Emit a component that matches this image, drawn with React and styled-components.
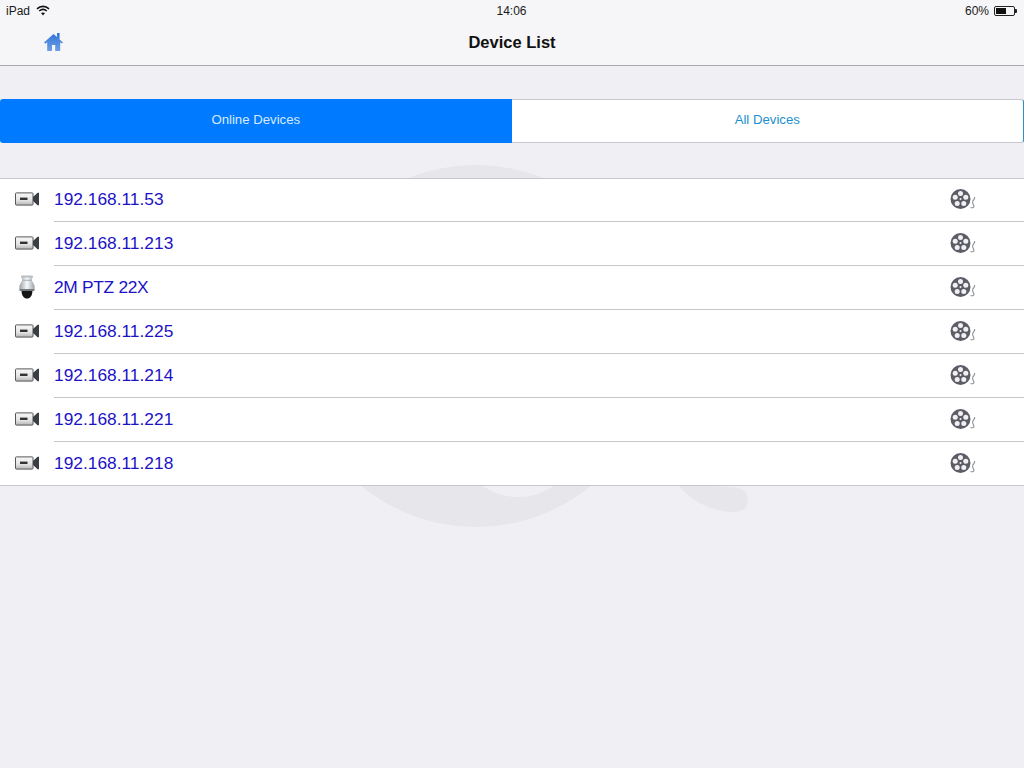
import React from "react";
import styled, { createGlobalStyle } from "styled-components";

const Global = createGlobalStyle`
  html, body { margin: 0; padding: 0; background: #efeff4; }
  body { font-family: "Liberation Sans", Arial, sans-serif; }
`;

const Page = styled.div`
  position: relative;
  width: 1024px;
  height: 768px;
  overflow: hidden;
  background: #efeff4;
`;

const Watermark = styled.svg`
  position: absolute;
  left: 0;
  top: 0;
  width: 1024px;
  height: 768px;
`;

const Content = styled.div`
  position: relative;
  display: flex;
  flex-direction: column;
`;

const Header = styled.header`
  height: 65px;
  background: #f6f6f8;
  border-bottom: 1px solid #a9a9ab;
  display: flex;
  flex-direction: column;
`;

const StatusBar = styled.div`
  height: 21px;
  padding: 0 7px 0 6px;
  display: grid;
  grid-template-columns: 1fr auto 1fr;
  align-items: center;
  font-size: 12px;
  color: #1a1a1a;
`;

const StatusLeft = styled.div`
  display: flex;
  align-items: center;
  gap: 6px;
`;

const StatusRight = styled.div`
  display: flex;
  align-items: center;
  justify-content: flex-end;
  gap: 5px;
`;

const Battery = styled.div`
  position: relative;
  box-sizing: border-box;
  width: 21px;
  height: 10px;
  border: 1px solid #222;
  border-radius: 2px;
  padding: 1px;
  margin-right: 2px;
  &::after {
    content: "";
    position: absolute;
    right: -3px;
    top: 2px;
    width: 2px;
    height: 4px;
    background: #222;
    border-radius: 0 1px 1px 0;
  }
`;

const BatteryFill = styled.div`
  height: 100%;
  background: #111;
`;

const NavBar = styled.div`
  position: relative;
  flex: 1;
  display: flex;
  align-items: center;
  justify-content: center;
  padding-bottom: 1px;
`;

const Title = styled.h1`
  margin: 0;
  font-size: 16.5px;
  font-weight: 700;
  color: #111;
`;

const HomeButton = styled.button`
  position: absolute;
  left: 43px;
  top: 11px;
  width: 21px;
  height: 20px;
  padding: 0;
  border: 0;
  background: none;
  display: flex;
`;

const Segments = styled.div`
  margin-top: 33px;
  height: 44px;
  display: flex;
  box-sizing: border-box;
`;

const Segment = styled.div`
  flex: 1;
  box-sizing: border-box;
  display: flex;
  align-items: center;
  justify-content: center;
  padding-bottom: 4px;
  font-size: 13.2px;
  background: ${(p) => (p.$active ? "#007aff" : "#ffffff")};
  color: ${(p) => (p.$active ? "#d8eaff" : "#1b8fd0")};
  border-radius: ${(p) => (p.$active ? "3px 0 0 3px" : "0 3px 3px 0")};
  border: ${(p) => (p.$active ? "none" : "1px solid #c8c8cc")};
  border-left: none;
  border-right: ${(p) => (p.$active ? "none" : "1px solid #2f8fc0")};
`;

const List = styled.ul`
  list-style: none;
  margin: 35px 0 0;
  padding: 0;
  background: #fff;
  border-top: 1px solid #c8c7cc;
  border-bottom: 1px solid #c8c7cc;
`;

const Row = styled.li`
  height: 43px;
  display: flex;
  align-items: center;
  box-sizing: border-box;
  padding: 0 48px 0 0;
  &:first-child {
    height: 42px;
    padding-bottom: 1px;
  }
`;

const DeviceIcon = styled.div`
  width: 54px;
  flex: none;
  display: flex;
  justify-content: center;
  margin-top: -1px;
`;

const RowBody = styled.div`
  flex: 1;
  display: flex;
  align-items: center;
  font-size: 17.35px;
  color: #1c12c6;
  letter-spacing: ${(p) => (p.$narrow ? "-0.3px" : "0")};
`;

const ReelSlot = styled.div`
  display: flex;
  margin-top: -2px;
`;

const Divider = styled.li`
  height: 1px;
  margin-left: 54px;
  background: #c8c7cc;
`;

const Home = () => (
  <svg width="21" height="20" viewBox="0 0 21 20">
    <defs>
      <linearGradient id="homeG" x1="0" y1="0" x2="0" y2="1">
        <stop offset="0" stopColor="#2f74d8" />
        <stop offset="1" stopColor="#6f9fe6" />
      </linearGradient>
    </defs>
    <path
      fill="url(#homeG)"
      d="M1 10.5 10.5 2l3.5 3V1h2.6v6.4l3.4 3.1-1.2 1-1.6-1.3V19h-5v-6H9v6H4.2V10.2l-1.9 1.5z"
    />
  </svg>
);

const Wifi = () => (
  <svg width="14" height="11" viewBox="0 0 14 11" fill="none" stroke="#111" strokeWidth="1.6">
    <path d="M1 3.8C4.5.6 9.5.6 13 3.8" />
    <path d="M3.2 6C5.4 4.1 8.6 4.1 10.8 6" />
    <path d="M7 10.4 5 8.1c1.2-.9 2.8-.9 4 0z" fill="#111" stroke="none" />
  </svg>
);

const Camera = () => (
  <svg width="24" height="14" viewBox="0 0 24 14">
    <defs>
      <linearGradient id="camG" x1="0" y1="0" x2="0" y2="1">
        <stop offset="0" stopColor="#f8f8f8" />
        <stop offset="0.6" stopColor="#e4e4e4" />
        <stop offset="1" stopColor="#b5b5b5" />
      </linearGradient>
    </defs>
    <rect x="0.5" y="0.9" width="17.5" height="12.2" rx="0.8" fill="url(#camG)" stroke="#55575a" strokeWidth="1" />
    <rect x="5" y="5.6" width="7.5" height="2.4" fill="#333" />
    <path d="M18 5 22.6 0.8H24V13.2H22.6L18 9z" fill="#3a3d42" />
  </svg>
);

const Dome = () => (
  <svg width="18" height="24" viewBox="0 0 18 24">
    <defs>
      <linearGradient id="domeG" x1="0" y1="0" x2="1" y2="0">
        <stop offset="0" stopColor="#9aa2a8" />
        <stop offset="0.5" stopColor="#f8fafb" />
        <stop offset="1" stopColor="#9aa2a8" />
      </linearGradient>
    </defs>
    <path d="M3.2 1h11.6l-1 4.2 1.2 2.2 1.6 3.4v3.6H1.4v-3.6L3 7.4l1.2-2.2z" fill="url(#domeG)" />
    <rect x="3" y="0.4" width="12" height="2.2" rx="1.1" fill="#b9bec2" />
    <rect x="4.2" y="4.8" width="9.6" height="1" fill="#aab0b5" />
    <rect x="1.6" y="14" width="14.8" height="2" fill="#74797e" />
    <path d="M3.6 16h10.8c0 4.6-2.4 7.6-5.4 7.6S3.6 20.6 3.6 16z" fill="#151515" />
  </svg>
);

const Reel = () => (
  <svg width="26" height="20" viewBox="0 0 26 20">
    <path d="M20.5 18.4c2.2 1 4.2-.2 3.2-2.1-.8-1.5-1.8-2.6-.8-4.2.9-1.4 2-2.2 1.8-4.1" fill="none" stroke="#8f9198" strokeWidth="1.1" />
    <circle cx="10.5" cy="10" r="10" fill="#5c5d66" />
    <g fill="#f1f1f4">
      <circle cx="10.5" cy="4.4" r="2.5" />
      <circle cx="15.8" cy="8.3" r="2.5" />
      <circle cx="13.8" cy="14.5" r="2.5" />
      <circle cx="7.2" cy="14.5" r="2.5" />
      <circle cx="5.2" cy="8.3" r="2.5" />
      <circle cx="10.5" cy="10" r="1" />
    </g>
  </svg>
);

const devices = [
  { name: "192.168.11.53", kind: "cam" },
  { name: "192.168.11.213", kind: "cam" },
  { name: "2M PTZ 22X", kind: "dome" },
  { name: "192.168.11.225", kind: "cam" },
  { name: "192.168.11.214", kind: "cam" },
  { name: "192.168.11.221", kind: "cam" },
  { name: "192.168.11.218", kind: "cam" },
];

export default function App() {
  return (
    <Page>
      <Global />
      <Watermark viewBox="0 0 1024 768">
        <circle cx="476" cy="346" r="181" fill="#e7e6eb" />
        <ellipse cx="518" cy="440" rx="60" ry="57" fill="#efeff4" />
        <path d="M670 470c10 26 38 42 64 42 10 0 14-6 14-12 0-8-6-13-16-13-20 0-34-4-46-20z" fill="#e7e6eb" />
      </Watermark>
      <Content>
        <Header>
          <StatusBar>
            <StatusLeft>
              <span>iPad</span>
              <Wifi />
            </StatusLeft>
            <span>14:06</span>
            <StatusRight>
              <span>60%</span>
              <Battery>
                <BatteryFill style={{ width: "60%" }} />
              </Battery>
            </StatusRight>
          </StatusBar>
          <NavBar>
            <HomeButton aria-label="Home">
              <Home />
            </HomeButton>
            <Title>Device List</Title>
          </NavBar>
        </Header>
        <Segments>
          <Segment $active>Online Devices</Segment>
          <Segment>All Devices</Segment>
        </Segments>
        <List>
          {devices.map((d, i) => (
            <React.Fragment key={d.name}>
              {i > 0 && <Divider />}
              <Row>
                <DeviceIcon>{d.kind === "cam" ? <Camera /> : <Dome />}</DeviceIcon>
                <RowBody $narrow={d.kind === "dome"}>{d.name}</RowBody>
                <ReelSlot>
                  <Reel />
                </ReelSlot>
              </Row>
            </React.Fragment>
          ))}
        </List>
      </Content>
    </Page>
  );
}
